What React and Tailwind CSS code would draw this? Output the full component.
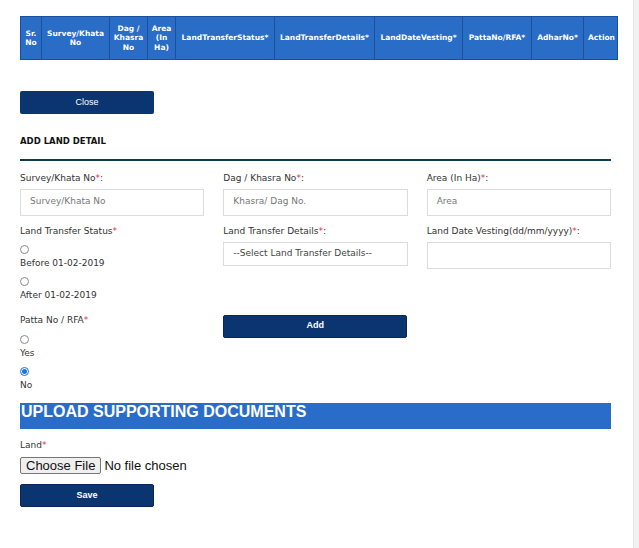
import React from "react";

const Star = () => <span className="text-[#d9363e]">*</span>;

const cols = [
  { w: "w-[21px]", t: <>Sr.<br />No</> },
  { w: "w-[68px]", t: <>Survey/Khata<br />No</> },
  { w: "w-[38px]", t: <>Dag /<br />Khasra<br />No</> },
  { w: "w-[28px]", t: <>Area<br />(In<br />Ha)</> },
  { w: "w-[99px]", t: "LandTransferStatus*" },
  { w: "w-[100px]", t: "LandTransferDetails*" },
  { w: "w-[88px]", t: "LandDateVesting*" },
  { w: "w-[69px]", t: "PattaNo/RFA*" },
  { w: "w-[52px]", t: "AdharNo*" },
  { w: "w-[35px]", t: "Action" },
];

function Radio({ checked }) {
  return (
    <span
      className={
        "w-[9px] h-[9px] rounded-full border flex items-center justify-center bg-white " +
        (checked ? "border-[#1a73e8]" : "border-[#8a8a8a]")
      }
    >
      {checked && <span className="block w-[5px] h-[5px] rounded-full bg-[#1a73e8]" />}
    </span>
  );
}

export default function App() {
  return (
    <div className="relative w-[639px] h-[548px] bg-white overflow-hidden font-['DejaVu_Sans',Verdana,sans-serif] text-[#333]">
      <div className="absolute right-0 top-0 h-full w-[6px] bg-[#f1f1f1] border-l border-[#e4e4e4]" />
      <div className="pl-[20px] pt-[16px]">
        <div className="flex w-[598px] h-[44px] bg-[#2a6dc6] border border-[#1a4fa0] text-white font-bold text-[7.5px] leading-[9.5px]">
          {cols.map((c, i) => (
            <div
              key={i}
              className={`${c.w} shrink-0 flex items-center justify-center text-center ${i < cols.length - 1 ? "border-r border-[#1c4f9c]" : ""}`}
            >
              <div>{c.t}</div>
            </div>
          ))}
        </div>

        <button className="mt-[31px] w-[134px] h-[23px] bg-[#0b3571] rounded-[2px] text-white text-[9px] font-['Liberation_Sans',Arial,sans-serif] block">
          Close
        </button>

        <div className="mt-[21px] text-[8.5px] font-bold text-[#111] leading-[12px]">ADD LAND DETAIL</div>
        <div className="mt-[12px] w-[591px] h-[1.5px] bg-[#0e3a4e]" />

        <div className="w-[591px] grid grid-cols-3 gap-x-[19px] text-[9px] mt-[11px]">
          <div>
            <div className="h-[12px] leading-[12px]">Survey/Khata No<Star />:</div>
            <div className="mt-[5px] h-[27px] border border-[#dcdcdc] flex items-center pl-[9px] text-[#777]">Survey/Khata No</div>
          </div>
          <div>
            <div className="h-[12px] leading-[12px]">Dag / Khasra No<Star />:</div>
            <div className="mt-[5px] h-[27px] border border-[#dcdcdc] flex items-center pl-[9px] text-[#777]">Khasra/ Dag No.</div>
          </div>
          <div>
            <div className="h-[12px] leading-[12px]">Area (In Ha)<Star />:</div>
            <div className="mt-[5px] h-[27px] border border-[#dcdcdc] flex items-center pl-[9px] text-[#777]">Area</div>
          </div>

          <div className="mt-[9px]">
            <div className="h-[12px] leading-[12px]">Land Transfer Status<Star /></div>
            <div className="mt-[8px] h-[9px] flex"><Radio /></div>
            <div className="mt-[3px] leading-[12px]">Before 01-02-2019</div>
            <div className="mt-[8px] h-[9px] flex"><Radio /></div>
            <div className="mt-[3px] leading-[12px]">After 01-02-2019</div>
            <div className="mt-[13px] leading-[12px]">Patta No / RFA<Star /></div>
            <div className="mt-[9px] h-[9px] flex"><Radio /></div>
            <div className="mt-[3px] leading-[12px]">Yes</div>
            <div className="mt-[8px] h-[9px] flex"><Radio checked /></div>
            <div className="mt-[3px] leading-[12px]">No</div>
          </div>
          <div className="mt-[9px]">
            <div className="h-[12px] leading-[12px]">Land Transfer Details<Star />:</div>
            <div className="mt-[5px] h-[24px] border border-[#dcdcdc] flex items-center pl-[9px] text-[#444]">--Select Land Transfer Details--</div>
            <button className="mt-[49px] w-[184px] h-[23px] bg-[#0b3571] border border-[#0a255a] rounded-[2px] text-white text-[9px] font-bold font-['Liberation_Sans',Arial,sans-serif] block">
              Add
            </button>
          </div>
          <div className="mt-[9px]">
            <div className="h-[12px] leading-[12px]">Land Date Vesting(dd/mm/yyyy)<Star />:</div>
            <div className="mt-[5px] h-[27px] border border-[#dcdcdc]" />
          </div>
        </div>

        <div className="mt-[12px] w-[591px] h-[26px] bg-[#2a6dc8] text-white font-bold text-[16px] leading-[18px] pl-[1px] font-['Liberation_Sans',Arial,sans-serif]">
          UPLOAD SUPPORTING DOCUMENTS
        </div>

        <div className="mt-[10px] text-[9px] leading-[12px]">Land<Star /></div>
        <div className="mt-[5px] flex items-center font-['Liberation_Sans',Arial,sans-serif] text-[13px] text-[#111]">
          <span className="h-[17px] px-[5px] flex items-center bg-[#efefef] border border-[#767676] rounded-[2px]">Choose File</span>
          <span className="ml-[3px]">No file chosen</span>
        </div>
        <button className="mt-[9px] w-[134px] h-[23px] bg-[#0b3571] border border-[#0a255a] rounded-[2px] text-white text-[9px] font-bold font-['Liberation_Sans',Arial,sans-serif] block">
          Save
        </button>
      </div>
    </div>
  );
}
